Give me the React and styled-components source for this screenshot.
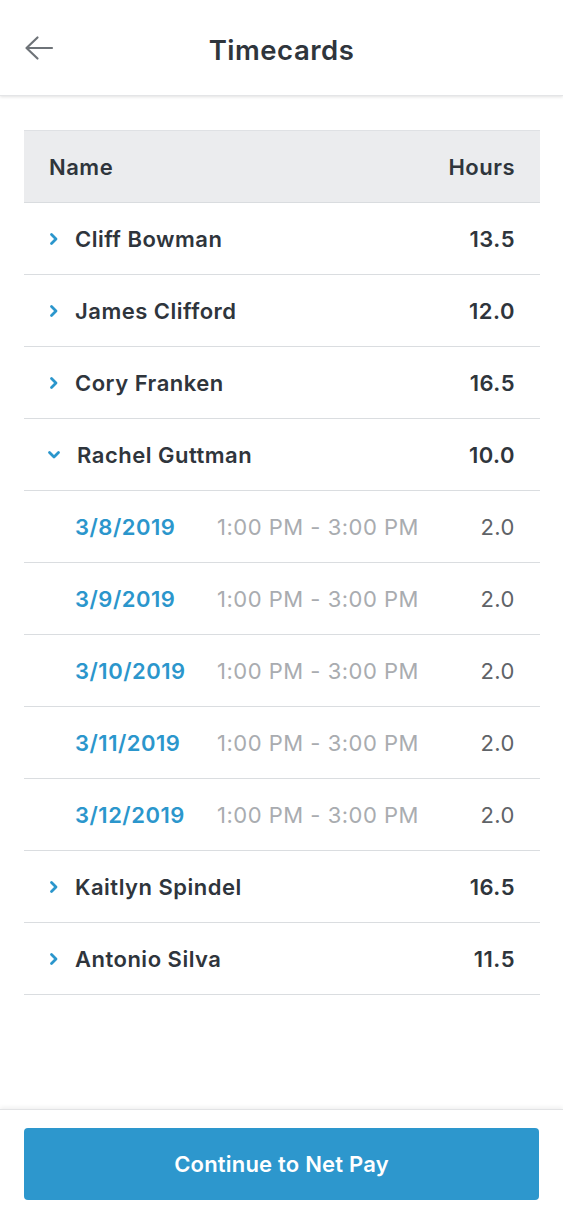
import React from "react";
import styled, { createGlobalStyle } from "styled-components";

const Global = createGlobalStyle`
  html, body { margin: 0; padding: 0; background: #fff; }
  body { font-family: Inter, "Open Sans", "Liberation Sans", sans-serif; color: #2f353c; }
  * { box-sizing: border-box; }
`;

const Page = styled.div`
  width: 563px;
  height: 1219px;
  display: flex;
  flex-direction: column;
  background: #fff;
`;

const TopBar = styled.header`
  height: 96px;
  flex: none;
  display: grid;
  grid-template-columns: 80px 1fr 80px;
  align-items: center;
  box-shadow: 0 1px 3px rgba(0, 0, 0, 0.12);
  border-bottom: 1px solid #e4e5e7;
  position: relative;
  z-index: 1;
`;

const BackButton = styled.button`
  border: none;
  background: none;
  padding: 0 0 0 24px;
  height: 40px;
  display: flex;
  align-items: center;
  color: #6e7378;
  cursor: pointer;
`;

const Title = styled.h1`
  margin: 0;
  padding-top: 4px;
  text-align: center;
  font-size: 27.5px;
  font-weight: 600;
  color: #2f353c;
  letter-spacing: 0.5px;
`;

const Content = styled.main`
  flex: 1;
  padding: 34px 23px 0 24px;
`;

const Table = styled.div`
  display: flex;
  flex-direction: column;
`;

const HeadRow = styled.div`
  height: 73px;
  display: flex;
  align-items: center;
  justify-content: space-between;
  padding: 0 25px 0 25px;
  background: #ebecee;
  border-top: 1px solid #dfe1e4;
  border-bottom: 1px solid #d9dcdf;
  font-size: 22px;
  font-weight: 600;
  color: #2f353c;
  letter-spacing: 0.5px;
`;

const Row = styled.div`
  height: 72px;
  display: flex;
  align-items: center;
  padding: 0 25px 0 24px;
  border-bottom: 1px solid #dadde0;
  font-size: 22px;
  letter-spacing: 0.5px;
`;

const Chevron = styled.span`
  width: 27px;
  flex: none;
  display: flex;
  align-items: center;
  color: #2b96cc;
  margin-left: ${(p) => (p.$open ? "-2px" : "0")};
`;

const Name = styled.span`
  flex: 1;
  font-weight: 600;
  color: #2f353c;
  margin-left: ${(p) => (p.$open ? "4px" : "0")};
`;

const Total = styled.span`
  font-weight: 600;
  color: #2f353c;
`;

const SubRow = styled(Row)`
  padding-left: 51px;
`;

const DateCell = styled.span`
  width: 142px;
  flex: none;
  font-weight: 600;
  color: #2b96cc;
`;

const TimeCell = styled.span`
  flex: 1;
  font-weight: 400;
  color: #a9acb0;
`;

const SubHours = styled.span`
  font-weight: 400;
  color: #5f6368;
`;

const Footer = styled.footer`
  flex: none;
  height: 110px;
  padding: 18px 24px 0 24px;
  border-top: 1px solid #e2e3e5;
  box-shadow: 0 -2px 4px rgba(0, 0, 0, 0.06);
`;

const PrimaryButton = styled.button`
  width: 100%;
  height: 72px;
  border: none;
  border-radius: 4px;
  background: #2d97cd;
  color: #fff;
  font-family: inherit;
  font-size: 22px;
  font-weight: 600;
  letter-spacing: 0.2px;
  cursor: pointer;
`;

const ArrowLeft = () => (
  <svg width="30" height="26" viewBox="0 0 30 26" fill="none">
    <path d="M28 13H3M13.5 2.5L2.5 13L13.5 23.5" stroke="currentColor" strokeWidth="2.2" strokeLinecap="round" strokeLinejoin="round" />
  </svg>
);

const ChevronRight = () => (
  <svg width="12" height="16" viewBox="0 0 12 16" fill="none">
    <path d="M3.5 3.5L8 8L3.5 12.5" stroke="currentColor" strokeWidth="2.8" strokeLinecap="round" strokeLinejoin="round" />
  </svg>
);

const ChevronDown = () => (
  <svg width="16" height="12" viewBox="0 0 16 12" fill="none">
    <path d="M3.5 3.5L8 8L12.5 3.5" stroke="currentColor" strokeWidth="2.8" strokeLinecap="round" strokeLinejoin="round" />
  </svg>
);

const people = [
  { name: "Cliff Bowman", hours: "13.5" },
  { name: "James Clifford", hours: "12.0" },
  { name: "Cory Franken", hours: "16.5" },
  {
    name: "Rachel Guttman",
    hours: "10.0",
    open: true,
    entries: ["3/8/2019", "3/9/2019", "3/10/2019", "3/11/2019", "3/12/2019"],
  },
  { name: "Kaitlyn Spindel", hours: "16.5" },
  { name: "Antonio Silva", hours: "11.5" },
];

export default function App() {
  return (
    <Page>
      <Global />
      <TopBar>
        <BackButton aria-label="Back">
          <ArrowLeft />
        </BackButton>
        <Title>Timecards</Title>
        <span />
      </TopBar>
      <Content>
        <Table>
          <HeadRow>
            <span>Name</span>
            <span>Hours</span>
          </HeadRow>
          {people.map((p) => (
            <React.Fragment key={p.name}>
              <Row>
                <Chevron $open={p.open}>{p.open ? <ChevronDown /> : <ChevronRight />}</Chevron>
                <Name $open={p.open}>{p.name}</Name>
                <Total>{p.hours}</Total>
              </Row>
              {p.open &&
                p.entries.map((d) => (
                  <SubRow key={d}>
                    <DateCell>{d}</DateCell>
                    <TimeCell>1:00 PM - 3:00 PM</TimeCell>
                    <SubHours>2.0</SubHours>
                  </SubRow>
                ))}
            </React.Fragment>
          ))}
        </Table>
      </Content>
      <Footer>
        <PrimaryButton>Continue to Net Pay</PrimaryButton>
      </Footer>
    </Page>
  );
}
